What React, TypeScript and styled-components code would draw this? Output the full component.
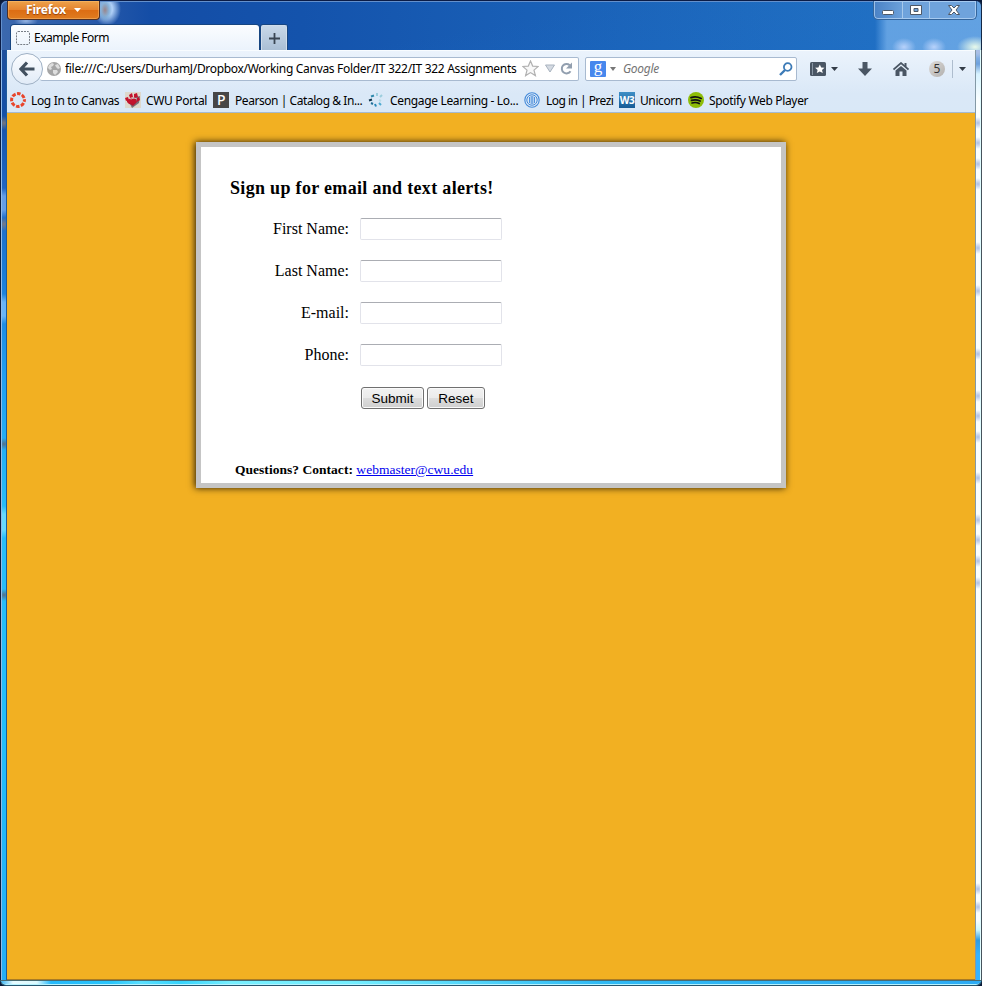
import React from "react";
import styled, { createGlobalStyle } from "styled-components";

const uiFont = '"Noto Sans", "Open Sans", sans-serif';

const GlobalStyle = createGlobalStyle`
  html, body { margin: 0; padding: 0; }
  body { width: 982px; height: 986px; overflow: hidden; }
  *, *::before, *::after { box-sizing: border-box; }
  svg { display: block; flex: none; }
`;

const Window = styled.div`
  width: 982px;
  height: 986px;
  display: grid;
  grid-template-columns: 7px 968px 7px;
  grid-template-rows: 50px 930px 6px;
  overflow: hidden;
  background: #0a1a38;
`;

const TitleBar = styled.header`
  grid-column: 1 / -1;
  display: flex;
  align-items: flex-start;
  border-top: 1px solid #0b1c46;
  border-left: 1px solid #0b1c46;
  border-right: 1px solid #132744;
  border-radius: 6px 6px 0 0;
  box-shadow: inset 1px 1px 0 #6490cc;
  background:
    radial-gradient(ellipse 12px 5px at 25px 20px, rgba(190, 215, 250, 0.7), transparent),
    radial-gradient(ellipse 7px 12px at 104px 9px, rgba(150, 120, 120, 0.85), rgba(110, 160, 200, 0.6) 60%, transparent),
    radial-gradient(ellipse 14px 17px at 106px 8px, rgba(190, 220, 255, 0.9) 40%, transparent),
    radial-gradient(ellipse 12px 9px at 903px 46px, rgba(198, 218, 255, 0.85), transparent),
    radial-gradient(ellipse 12px 9px at 933px 46px, rgba(198, 218, 255, 0.85), transparent),
    radial-gradient(ellipse 18px 11px at 974px 46px, rgba(240, 255, 235, 0.95), transparent),
    linear-gradient(90deg, transparent 874px, rgba(120, 178, 236, 0.75) 886px),
    linear-gradient(170deg, transparent 50%, rgba(28, 108, 200, 0.35)),
    linear-gradient(90deg, #3b68ae 0, #295aa9 90px, #144da6 150px, #1453ac 300px, #1b64ba 620px, #2170c2 870px);
`;

const TitleLeft = styled.div`
  display: flex;
  flex-direction: column;
  padding-left: 6px;
  width: 872px;
  height: 49px;
`;

const FirefoxButton = styled.button`
  display: flex;
  align-items: center;
  gap: 8px;
  width: 93px;
  height: 19px;
  padding: 0 0 1px 18px;
  border: 1px solid #4f2f26;
  border-top: 0;
  border-radius: 0 0 4px 4px;
  background: linear-gradient(#eda24b, #e58430 48%, #dc6c13 50%, #df7c20);
  box-shadow: inset 0 0 0 1px rgba(255, 197, 120, 0.45);
  color: #fff;
  font: 700 12px ${uiFont};
  letter-spacing: -0.18px;
  text-shadow: 0 1px 1px #944006;
`;

const TabStrip = styled.div`
  display: flex;
  align-items: flex-end;
  gap: 2px;
  height: 26px;
  margin-top: 4px;
  padding-left: 4px;
`;

const Tab = styled.div`
  display: flex;
  align-items: center;
  gap: 4px;
  width: 248px;
  height: 25px;
  padding-left: 5px;
  border-radius: 3px 3px 0 0;
  background: linear-gradient(#fbfdff, #ebf3fc);
  box-shadow: 0 0 0 1px #174681;
`;

const NewTab = styled.div`
  display: grid;
  place-items: center;
  width: 26px;
  height: 25px;
  border: 1px solid #d1ddeb;
  border-bottom: 0;
  border-radius: 2px 2px 0 0;
  background: linear-gradient(#c8d8e8, #aabfd5);
  box-shadow: 0 0 0 1px #174681;
`;

const Label = styled.span<{ $ls?: number; $italic?: boolean }>`
  flex: none;
  font-family: ${uiFont};
  font-size: 12px;
  line-height: 18px;
  font-style: ${(p) => (p.$italic ? "italic" : "normal")};
  color: ${(p) => (p.$italic ? "#747474" : "#000")};
  letter-spacing: ${(p) => p.$ls ?? -0.4}px;
  white-space: pre;
`;

const WindowControls = styled.div`
  display: grid;
  grid-template-columns: 28px 27px 48px;
  width: 104px;
  height: 19px;
  border: 1px solid #34659c;
  border-top: 0;
  border-radius: 0 0 5px 5px;
  box-shadow: inset 0 0 0 1px rgba(190, 218, 248, 0.7);
  background: linear-gradient(90deg, #4a82c6, #6fa3dc 30%, #6fa3dc);
`;

const Control = styled.div`
  display: grid;
  place-items: center;
  & + & { border-left: 1px solid #a7c9ec; }
`;

const LeftFrame = styled.div`
  border-left: 1px solid #0b1c3e;
  border-right: 1px solid #1e5b9c;
  box-shadow: inset 1px 0 0 #8fbbeb;
  background:
    radial-gradient(ellipse 7px 7px at 3px 73px, #77777d, transparent),
    radial-gradient(ellipse 7px 7px at 3px 174px, #777a86, transparent),
    radial-gradient(ellipse 7px 6px at 3px 394px, #55708b, transparent),
    radial-gradient(ellipse 7px 6px at 3px 545px, #55708b, transparent),
    linear-gradient(transparent 138px, rgba(130,180,245,.7) 146px, rgba(130,180,245,.7) 160px, transparent 168px),
    linear-gradient(transparent 244px, rgba(130,195,255,.75) 252px, rgba(130,195,255,.75) 266px, transparent 274px),
    linear-gradient(transparent 456px, rgba(130,230,255,.7) 464px, rgba(130,230,255,.7) 480px, transparent 488px),
    linear-gradient(#1e4f9c, #144fa6 60px, #2066c4 140px, #1c7bd6 220px, #21a0f2 330px, #27bdf8 460px, #24bdfb 700px, #25aef5 930px);
`;

const smudges = [2, 73, 93, 114, 134, 198, 241, 304, 346, 366, 387, 428, 470, 490, 511, 533, 839, 857];

const RightFrame = styled.div`
  border-left: 1px solid #8499a6;
  border-right: 1px solid #46535c;
  box-shadow: inset -1px 0 0 #dffcff;
  background:
    ${smudges.map((y) => `radial-gradient(ellipse 6px 6px at 2px ${y}px, #aebfe4, transparent)`).join(",")},
    linear-gradient(#9cc3ee, #6da0dc 14px, #d7f2ff 24px, #fafeff 50px, #fafeff 870px, #cbf7ff 880px, #329ce0 890px, #35b3ff 905px);
`;

const BottomFrame = styled.div`
  grid-column: 1 / -1;
  border: 1px solid #275770;
  border-top-color: #4a6b70;
  border-radius: 0 0 6px 6px;
  box-shadow: inset 0 -1px 0 #b5f3ff;
  background: linear-gradient(90deg, #39b5f4 0, #e7fcff 12px, #dcfaff 36px, #25b9fb 50px, #28c6fd 110px, #59dfff 140px, #36d4fd 180px, #77efff 230px, #73eeff 350px, #2fbaf5 600px, #2cabf5 982px);
`;

const Client = styled.div`
  display: flex;
  flex-direction: column;
  min-width: 0;
`;

const Toolbox = styled.div`
  display: flex;
  flex-direction: column;
  height: 63px;
  border-top: 1px solid #f8fcff;
  border-bottom: 1px solid #a5bad1;
  background: linear-gradient(#ebf3fc, #dae8f7 70%, #d9e8f7);
`;

const NavRow = styled.div`
  display: flex;
  align-items: center;
  height: 35px;
  padding-left: 4px;
`;

const BackButton = styled.div`
  z-index: 1;
  display: grid;
  place-items: center;
  flex: none;
  width: 32px;
  height: 32px;
  margin-right: -3px;
  border: 1px solid #9eb0c4;
  border-radius: 50%;
  background: linear-gradient(#fcfdff, #e1ebf7);
`;

const Field = styled.div<{ $w: number }>`
  display: flex;
  align-items: center;
  flex: none;
  width: ${(p) => p.$w}px;
  height: 24px;
  border: 1px solid #a8bad0;
  border-radius: 2px;
  background: #fff;
`;

const UrlField = styled(Field)`
  margin-right: 6px;
  padding-left: 7px;
  border-left: 0;
  gap: 4px;
`;

const SearchField = styled(Field)`
  padding-left: 4px;
  gap: 4px;
`;

const UrlText = styled(Label)`
  width: 453px;
  overflow: hidden;
`;

const Glyph = styled.span`
  display: grid;
  place-items: center;
  width: 16px;
  height: 16px;
  background: #4787ed;
  border-radius: 1px;
  color: #fff;
  font: 17px/12px "Liberation Serif", serif;
  padding-bottom: 4px;
`;

const SearchText = styled(Label)`
  width: 152px;
`;

const Tools = styled.div`
  display: flex;
  align-items: center;
  height: 24px;
  padding-left: 13px;
`;

const Slot = styled.div<{ $w: number }>`
  width: ${(p) => p.$w}px;
  flex: none;
`;

const Count = styled.div`
  display: grid;
  place-items: center;
  width: 16px;
  height: 16px;
  margin-right: 7px;
  border-radius: 50%;
  background: linear-gradient(135deg, #dedcda, #b2b0ae);
  color: #333;
  font: 12px/16px ${uiFont};
`;

const Divider = styled.div`
  width: 1px;
  height: 18px;
  margin-right: 6px;
  background: #aebdce;
`;

const BookmarkRow = styled.nav`
  display: flex;
  align-items: center;
  height: 26px;
  padding: 1px 0 0 3px;
`;

const Bookmark = styled.div<{ $w: number; $gap: number }>`
  display: flex;
  align-items: center;
  gap: ${(p) => p.$gap}px;
  flex: none;
  width: ${(p) => p.$w}px;
  ${Label} { position: relative; top: 1px; }
`;

const Badge = styled.span<{ $bg: string; $size: number; $weight?: number }>`
  display: grid;
  place-items: center;
  flex: none;
  width: 16px;
  height: 16px;
  background: ${(p) => p.$bg};
  color: #fff;
  font: ${(p) => p.$weight ?? 700} ${(p) => p.$size}px/16px ${uiFont};
  letter-spacing: -0.5px;
`;

const Page = styled.main`
  flex: 1;
  padding: 29px 0 0 189px;
  border-bottom: 1px solid #a87b25;
  background: #f2b022;
`;

const Card = styled.section`
  width: 590px;
  height: 346px;
  padding: 30px 0 0 29px;
  border: 5px solid #c5c5c5;
  background: #fff;
  box-shadow: -1px 0 7px rgba(0, 0, 0, 0.85);
  font-family: "Liberation Serif", serif;
  color: #000;
`;

const Heading = styled.h3`
  margin: 0 0 19px;
  font-size: 18px;
  line-height: 22px;
  letter-spacing: 0.32px;
`;

const FormRow = styled.div`
  display: grid;
  grid-template-columns: 119px 142px;
  column-gap: 11px;
  height: 42px;
  font-size: 16px;
  line-height: 21px;
  text-align: right;
`;

const Input = styled.input`
  width: 142px;
  height: 22px;
  padding: 1px 3px;
  border: 1px solid #e2e3ea;
  border-top-color: #abadb3;
  border-radius: 2px;
  background: #fff;
  outline: none;
`;

const Buttons = styled.div`
  display: flex;
  gap: 3px;
  padding-left: 131px;
  margin-top: 1px;
`;

const FormButton = styled.button<{ $w: number }>`
  width: ${(p) => p.$w}px;
  height: 22px;
  padding: 0;
  border: 1px solid #707070;
  border-radius: 3px;
  background: linear-gradient(#f2f2f2, #ebebeb 48%, #dddddd 50%, #cfcfcf);
  box-shadow: inset 0 0 0 1px #fafafa;
  font: 13.5px "Liberation Sans", sans-serif;
  color: #000;
`;

const Contact = styled.p`
  margin: 53px 0 0 5px;
  font-size: 13.5px;
  line-height: 16px;
  letter-spacing: 0.03px;
  a { color: #0000ee; }
`;

const Caret = ({ color = "#333c47", w = 7 }: { color?: string; w?: number }) => (
  <svg width={w} height="4" viewBox="0 0 8 4" preserveAspectRatio="none"><path d="M0 0h8L4 4z" fill={color} /></svg>
);

const Globe = () => (
  <svg width="14" height="14" viewBox="0 0 14 14">
    <circle cx="7" cy="7" r="7" fill="#a5a5a5" />
    <path d="M2 3l3-2 2 1-1 2-2 1 1 2-2 1-2-2zM8 3l3-1 2 4-2 1-2-2zM6 8l4 0 1 2-3 3-2-2z" fill="#dedede" />
  </svg>
);

const CanvasIcon = () => (
  <svg width="16" height="16" viewBox="0 0 16 16">
    <circle cx="8" cy="8" r="6.4" fill="none" stroke="#e8452c" strokeWidth="3" strokeDasharray="3.6 1.427" strokeDashoffset="1.8" />
  </svg>
);

const PawIcon = () => (
  <svg width="16" height="16" viewBox="0 0 16 16">
    <path fill="#ddd8cd" d="M0 0h16v16H0z" />
    <path d="M7 6l8-2-1 7-7 5-2-4z" fill="#77727a" />
    <path d="M2 8l4-2 5 1 1 3-4 3-4-1-2-2z" fill="#c3132e" />
    <path d="M0 6l3-1 1 3-3 1zM4 3l3-2 1 4-3 1zM9 2l3-1 1 4-4 1zM12 6l2-1 1 3-3 2z" fill="#c3132e" />
    <path d="M4 11l4 1 4-2-4 4z" fill="#b1162e" />
    <path d="M4 6l2 1 3-1 3 1" stroke="#e5c9ca" strokeWidth=".8" fill="none" />
  </svg>
);

const CengageIcon = () => (
  <svg width="16" height="16" viewBox="0 0 16 16" strokeWidth="2" fill="none">
    <path d="M1 8.500l3-1" stroke="#12384f" />
    <path d="M3 4.500l3-1" stroke="#3089ad" />
    <path d="M9 4V1M12 5l2-2" stroke="#9bcddd" />
    <path d="M11 8l2 1" stroke="#b8dce7" />
    <path d="M11 11l2 2" stroke="#4faad0" />
    <path d="M7 12l1 2.500" stroke="#2689bb" />
    <path d="M3 11l2 1" stroke="#216f98" />
  </svg>
);

const PreziIcon = () => (
  <svg width="16" height="16" viewBox="0 0 16 16" fill="none" stroke="#4389d9">
    <circle cx="8" cy="8" r="7.2" strokeWidth="1.1" />
    <circle cx="8" cy="8" r="5.2" strokeWidth="1" />
    <path d="M5.500 5v6M7.200 4v8M8.800 4v8M10.500 5v6" strokeWidth=".9" />
  </svg>
);

const SpotifyIcon = () => (
  <svg width="16" height="16" viewBox="0 0 16 16" fill="none">
    <circle cx="8" cy="8" r="8" fill="#8dbc08" />
    <path d="M3 5.6q5-1.800 10.200.8M3.500 8.400q4.500-1.500 8.600.7M4 11q4-1.200 7.200.6" stroke="#111" strokeWidth="1.7" strokeLinecap="round" />
  </svg>
);

const bookmarks = [
  { icon: <CanvasIcon />, text: "Log In to Canvas", w: 115, ls: -0.34, gap: 5 },
  { icon: <PawIcon />, text: "CWU Portal", w: 88, ls: -0.32, gap: 5 },
  { icon: <Badge $bg="#464646" $size={14} $weight={500}>P</Badge>, text: "Pearson | Catalog & In...", w: 155, ls: -0.44, gap: 6 },
  { icon: <CengageIcon />, text: "Cengage Learning - Lo...", w: 156, ls: -0.34, gap: 6 },
  { icon: <PreziIcon />, text: "Log in | Prezi", w: 95, ls: -0.53, gap: 6 },
  { icon: <Badge $bg="linear-gradient(#3f8fc6, #175b96)" $size={10}>W3</Badge>, text: "Unicorn", w: 69, ls: -0.4, gap: 5 },
  { icon: <SpotifyIcon />, text: "Spotify Web Player", w: 125, ls: -0.33, gap: 5 },
];

const fields = ["First Name:", "Last Name:", "E-mail:", "Phone:"];

export default function App() {
  return (
    <>
      <GlobalStyle />
      <Window>
        <TitleBar>
          <TitleLeft>
            <FirefoxButton>Firefox <Caret color="#fff" /></FirefoxButton>
            <TabStrip>
              <Tab>
                <svg width="14" height="14" viewBox="0 0 14 14">
                  <rect x=".5" y=".5" width="13" height="13" rx="1.5" fill="none" stroke="#777d85" strokeDasharray="2 1" />
                </svg>
                <Label $ls={-0.5}>Example Form</Label>
              </Tab>
              <NewTab>
                <svg width="11" height="11" viewBox="0 0 11 11"><path d="M5.500 0v11M0 5.500h11" stroke="#3a4653" strokeWidth="1.8" /></svg>
              </NewTab>
            </TabStrip>
          </TitleLeft>
          <WindowControls>
            <Control>
              <svg width="13" height="13" viewBox="0 0 13 13"><rect x=".5" y="6.5" width="11" height="4" rx="1" fill="#fff" stroke="#4e5867" /></svg>
            </Control>
            <Control>
              <svg width="12" height="10" viewBox="0 0 12 10"><path d="M.5.5h11v9H.5zM4 3.500h4v3H4z" fill="#fff" fillRule="evenodd" stroke="#4e5867" /></svg>
            </Control>
            <Control>
              <svg width="12" height="10" viewBox="0 0 12 10"><path d="M.5.5h3L6 3 8.500.5h3L8 5l3.500 4.500h-3L6 7 3.500 9.500h-3L4 5z" fill="#fff" stroke="#4e5867" /></svg>
            </Control>
          </WindowControls>
        </TitleBar>
        <LeftFrame />
        <Client>
          <Toolbox>
            <NavRow>
              <BackButton>
                <svg width="16" height="16" viewBox="0 0 16 16"><path d="M8 1.500L2 8l6 6.500M2.500 8H15.500" fill="none" stroke="#42505f" strokeWidth="3.2" /></svg>
              </BackButton>
              <UrlField $w={539}>
                <Globe />
                <UrlText $ls={-0.31}>file:///C:/Users/DurhamJ/Dropbox/Working Canvas Folder/IT 322/IT 322 Assignments</UrlText>
                <svg width="17" height="17" viewBox="0 0 17 17"><path d="M8.500 1l2.200 5.100 5.500.4-4.200 3.600 1.400 5.500-4.900-3-4.900 3L5 10.100.8 6.500l5.500-.4z" fill="#f8f8f8" stroke="#b1b1b1" strokeWidth="1.2" /></svg>
                <Slot $w={13}>
                  <svg width="14" height="9" viewBox="0 0 14 9"><path d="M2.500 1h9L7 8z" fill="#d4dae2" stroke="#a9b3bf" /></svg>
                </Slot>
                <svg width="13" height="13" viewBox="0 0 13 13"><path d="M10.500 9.200A4.700 4.700 0 1 1 9.700 3.200" fill="none" stroke="#929faf" strokeWidth="2" /><path d="M12 .5v6H6z" fill="#929faf" /></svg>
              </UrlField>
              <SearchField $w={212}>
                <Glyph>g</Glyph>
                <Slot $w={9}><Caret color="#777" w={6} /></Slot>
                <SearchText $italic $ls={-0.3}>Google</SearchText>
                <svg width="14" height="14" viewBox="0 0 14 14"><circle cx="8.700" cy="5" r="3.800" fill="none" stroke="#3d7bb7" strokeWidth="1.800" /><path d="M6 8L1 13" stroke="#3d7bb7" strokeWidth="2.400" /></svg>
              </SearchField>
              <Tools>
                <Slot $w={21}>
                  <svg width="16" height="14" viewBox="0 0 16 14"><rect width="16" height="14" rx="1.5" fill="#4a5664" /><path d="M2.500 1v12" stroke="#8996a4" /><path d="M9.800 2.500l1.400 3 3.300.3-2.500 2.100.8 3.200-3-1.700-3 1.700.8-3.200-2.500-2.100 3.300-.3z" fill="#fff" /></svg>
                </Slot>
                <Slot $w={27}><Caret /></Slot>
                <Slot $w={35}>
                  <svg width="14" height="14" viewBox="0 0 14 14"><path d="M4.500 0h5v6.500H14L7 14 0 6.500h4.500z" fill="#4a5664" /></svg>
                </Slot>
                <Slot $w={36}>
                  <svg width="16" height="14" viewBox="0 0 16 14"><path d="M.5 7.500L8 1l7.500 6.500" fill="none" stroke="#4a5664" strokeWidth="1.700" /><path d="M2.500 8.500L8 4l5.500 4.500V14H9.500V9.500h-3V14h-4zM11.500 1h2v4l-2-1.500z" fill="#4a5664" /></svg>
                </Slot>
                <Count>5</Count>
                <Divider />
                <Caret />
              </Tools>
            </NavRow>
            <BookmarkRow>
              {bookmarks.map((b) => (
                <Bookmark key={b.text} $w={b.w} $gap={b.gap}>{b.icon}<Label $ls={b.ls}>{b.text}</Label></Bookmark>
              ))}
            </BookmarkRow>
          </Toolbox>
          <Page>
            <Card>
              <Heading>Sign up for email and text alerts!</Heading>
              {fields.map((f) => (
                <FormRow key={f}><label>{f}</label><Input aria-label={f} /></FormRow>
              ))}
              <Buttons>
                <FormButton $w={63}>Submit</FormButton>
                <FormButton $w={58}>Reset</FormButton>
              </Buttons>
              <Contact><b>Questions? Contact:</b> <a href="mailto:webmaster@cwu.edu">webmaster@cwu.edu</a></Contact>
            </Card>
          </Page>
        </Client>
        <RightFrame />
        <BottomFrame />
      </Window>
    </>
  );
}
